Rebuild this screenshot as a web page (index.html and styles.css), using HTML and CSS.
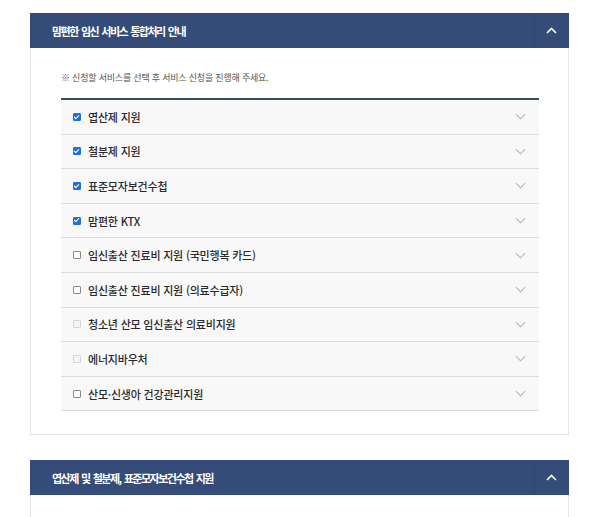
FILE: index.html
```html
<!DOCTYPE html>
<html lang="ko">
<head>
  <meta charset="UTF-8">
  <title>맘편한 임신 서비스 통합처리 안내</title>
  <link rel="stylesheet" href="styles.css">
</head>
<body>
  <div class="wrap">
    <div class="panel">
      <div class="panel-head">
        <h2>맘편한 임신 서비스 통합처리 안내</h2>
        <span class="toggle"><svg width="11" height="7" viewBox="0 0 11 7"><path d="M1 6 L5.5 1.5 L10 6" fill="none" stroke="#fff" stroke-width="1.6"/></svg></span>
      </div>
      <div class="panel-body">
        <p class="note">※ 신청할 서비스를 선택 후 서비스 신청을 진행해 주세요.</p>
        <ul class="svc">
          <li><span class="chk on"></span>엽산제 지원<i class="arr"></i></li>
          <li><span class="chk on"></span>철분제 지원<i class="arr"></i></li>
          <li><span class="chk on"></span>표준모자보건수첩<i class="arr"></i></li>
          <li><span class="chk on"></span>맘편한 KTX<i class="arr"></i></li>
          <li><span class="chk"></span>임신출산 진료비 지원 (국민행복 카드)<i class="arr"></i></li>
          <li><span class="chk"></span>임신출산 진료비 지원 (의료수급자)<i class="arr"></i></li>
          <li><span class="chk off"></span>청소년 산모 임신출산 의료비지원<i class="arr"></i></li>
          <li><span class="chk off"></span>에너지바우처<i class="arr"></i></li>
          <li><span class="chk"></span>산모·신생아 건강관리지원<i class="arr"></i></li>
        </ul>
      </div>
    </div>

    <div class="panel">
      <div class="panel-head">
        <h2>엽산제 및 철분제, 표준모자보건수첩 지원</h2>
        <span class="toggle"><svg width="11" height="7" viewBox="0 0 11 7"><path d="M1 6 L5.5 1.5 L10 6" fill="none" stroke="#fff" stroke-width="1.6"/></svg></span>
      </div>
      <div class="panel-body tall"></div>
    </div>
  </div>
</body>
</html>
```

FILE: styles.css
```css
body { margin: 0; background: #fff; font-family: "Noto Sans CJK KR", "Noto Sans", sans-serif; color: #333; }
.wrap { padding: 13px 31px 0 30px; }
.panel { margin-bottom: 25px; }
.panel-head { display: flex; align-items: center; height: 35px; background: #354c79; }
.panel-head h2 { flex: 1; margin: 0; padding-left: 22px; font-size: 11px; font-weight: 700; letter-spacing: -1.5px; word-spacing: 1.5px; color: #fff; }
.toggle { width: 35px; height: 35px; display: flex; align-items: center; justify-content: center; box-shadow: inset 1px 0 0 #2f4470; }
.panel-body { border: 1px solid #e4e4e4; border-top: none; padding: 20px 29px 23px 30px; }
.panel-body.tall { height: 40px; padding: 0; }
.note { margin: 0 0 10px; font-size: 9px; line-height: 20px; color: #555; letter-spacing: -0.2px; }
.svc { list-style: none; margin: 0; padding: 0; border-top: 2px solid #3a4966; }
.svc li { display: flex; align-items: center; height: 33.6px; padding: 0 12px; background: #f8f8f8; border-bottom: 1px solid #dcdcdc; font-size: 11px; font-weight: 500; color: #2a2a2a; letter-spacing: -0.2px; }
.chk { width: 6px; height: 6px; margin-right: 7px; border: 1px solid #8a8a8a; border-radius: 1px; background: #fff; position: relative; }
.chk.on { background: #2370d4; border-color: #2370d4; }
.chk.on::after { content: ""; position: absolute; left: 1.3px; top: -0.3px; width: 2px; height: 4px; border: solid #fff; border-width: 0 1.2px 1.2px 0; transform: rotate(45deg); }
.chk.off { border-color: #d6d6d6; background: #f4f4f4; }
.arr { margin-left: auto; width: 6px; height: 6px; margin-right: 3px; margin-top: -4px; border: solid #b5b5b5; border-width: 0 1px 1px 0; transform: rotate(45deg); }
```
